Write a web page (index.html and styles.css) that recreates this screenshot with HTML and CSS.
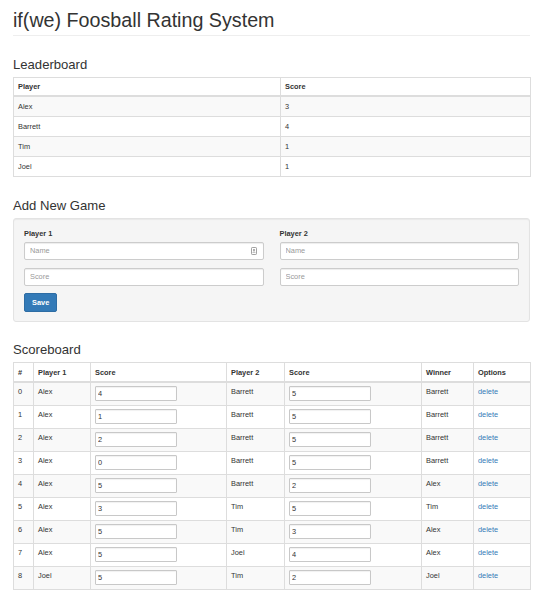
FILE: index.html
```html
<!DOCTYPE html>
<html lang="en">
<head>
<meta charset="utf-8">
<title>if(we) Foosball Rating System</title>
<link rel="stylesheet" href="styles.css">
</head>
<body>
<div class="page">
  <h1 class="title">if(we) Foosball Rating System</h1>

  <section class="section section-first">
    <h3 class="heading">Leaderboard</h3>
    <table class="tbl tbl-leader">
      <colgroup><col class="lw-player"><col class="lw-score"></colgroup>
      <thead><tr><th>Player</th><th>Score</th></tr></thead>
      <tbody>
        <tr><td>Alex</td><td>3</td></tr>
        <tr><td>Barrett</td><td>4</td></tr>
        <tr><td>Tim</td><td>1</td></tr>
        <tr><td>Joel</td><td>1</td></tr>
      </tbody>
    </table>
  </section>

  <section class="section">
    <h3 class="heading">Add New Game</h3>
    <form class="well">
      <div class="col">
        <label class="label">Player 1</label>
        <div class="field">
          <input class="form-control" type="text" placeholder="Name">
          <svg class="contact-icon" width="6" height="8" viewBox="0 0 6 8"><rect x="0.5" y="0.5" width="5" height="7" rx="0.8" fill="none" stroke="#8a8a8a" stroke-width="0.8"/><circle cx="3" cy="3" r="0.9" fill="#8a8a8a"/><path d="M1.6 5.6 Q3 4.2 4.4 5.6" fill="none" stroke="#8a8a8a" stroke-width="0.8"/></svg>
        </div>
        <div class="field">
          <input class="form-control" type="text" placeholder="Score">
        </div>
        <button class="btn" type="button">Save</button>
      </div>
      <div class="col">
        <label class="label">Player 2</label>
        <div class="field">
          <input class="form-control" type="text" placeholder="Name">
        </div>
        <div class="field">
          <input class="form-control" type="text" placeholder="Score">
        </div>
      </div>
    </form>
  </section>

  <section class="section">
    <h3 class="heading">Scoreboard</h3>
    <table class="tbl tbl-score">
      <colgroup>
        <col class="sw-num"><col class="sw-p1"><col class="sw-s1"><col class="sw-p2"><col class="sw-s2"><col class="sw-win"><col class="sw-opt">
      </colgroup>
      <thead><tr><th>#</th><th>Player 1</th><th>Score</th><th>Player 2</th><th>Score</th><th>Winner</th><th>Options</th></tr></thead>
      <tbody>
        <tr><td>0</td><td>Alex</td><td><input class="score-input" type="text" value="4"></td><td>Barrett</td><td><input class="score-input" type="text" value="5"></td><td>Barrett</td><td><a class="link" href="#">delete</a></td></tr>
        <tr><td>1</td><td>Alex</td><td><input class="score-input" type="text" value="1"></td><td>Barrett</td><td><input class="score-input" type="text" value="5"></td><td>Barrett</td><td><a class="link" href="#">delete</a></td></tr>
        <tr><td>2</td><td>Alex</td><td><input class="score-input" type="text" value="2"></td><td>Barrett</td><td><input class="score-input" type="text" value="5"></td><td>Barrett</td><td><a class="link" href="#">delete</a></td></tr>
        <tr><td>3</td><td>Alex</td><td><input class="score-input" type="text" value="0"></td><td>Barrett</td><td><input class="score-input" type="text" value="5"></td><td>Barrett</td><td><a class="link" href="#">delete</a></td></tr>
        <tr><td>4</td><td>Alex</td><td><input class="score-input" type="text" value="5"></td><td>Barrett</td><td><input class="score-input" type="text" value="2"></td><td>Alex</td><td><a class="link" href="#">delete</a></td></tr>
        <tr><td>5</td><td>Alex</td><td><input class="score-input" type="text" value="3"></td><td>Tim</td><td><input class="score-input" type="text" value="5"></td><td>Tim</td><td><a class="link" href="#">delete</a></td></tr>
        <tr><td>6</td><td>Alex</td><td><input class="score-input" type="text" value="5"></td><td>Tim</td><td><input class="score-input" type="text" value="3"></td><td>Alex</td><td><a class="link" href="#">delete</a></td></tr>
        <tr><td>7</td><td>Alex</td><td><input class="score-input" type="text" value="5"></td><td>Joel</td><td><input class="score-input" type="text" value="4"></td><td>Alex</td><td><a class="link" href="#">delete</a></td></tr>
        <tr><td>8</td><td>Joel</td><td><input class="score-input" type="text" value="5"></td><td>Tim</td><td><input class="score-input" type="text" value="2"></td><td>Joel</td><td><a class="link" href="#">delete</a></td></tr>
      </tbody>
    </table>
  </section>
</div>
</body>
</html>
```
FILE: styles.css
```css
* { box-sizing: border-box; }
html, body { margin: 0; padding: 0; background: #fff; }
body {
  font-family: "Liberation Sans", Arial, sans-serif;
  color: #333;
  font-size: 7.4px;
  line-height: 11px;
}
.page { padding: 9px 13px 0; width: 543px; }

.title {
  font-size: 19.7px;
  line-height: 22px;
  font-weight: 400;
  margin: 0;
  padding-bottom: 4px;
  border-bottom: 1px solid #eee;
}

.section { margin-top: 20.5px; }
.section-first { margin-top: 21px; }

.heading {
  font-size: 13.1px;
  line-height: 15px;
  font-weight: 400;
  margin: 0 0 5px;
}

/* tables */
.tbl {
  width: 517px;
  border-collapse: collapse;
  table-layout: fixed;
}
.tbl th, .tbl td {
  border: 1px solid #ddd;
  text-align: left;
  vertical-align: top;
  padding: 4px 4px;
  line-height: 11px;
}
.tbl th {
  font-weight: 700;
  padding: 3px 4px;
  border-bottom-width: 2px;
}
.tbl tbody tr:nth-child(odd) { background: #f9f9f9; }

.lw-player { width: 267px; }
.lw-score { width: 250px; }

.tbl-score th { padding: 4px 4px 3px; }
.tbl-score td { padding: 3px 4px 4px; }

.sw-num { width: 20px; }
.sw-p1 { width: 57px; }
.sw-s1 { width: 136px; }
.sw-p2 { width: 58px; }
.sw-s2 { width: 137px; }
.sw-win { width: 52px; }
.sw-opt { width: 57px; }

.score-input {
  display: block;
  width: 82px;
  height: 15px;
  margin: 0;
  padding: 0 2px;
  border: 1px solid #c8c8c8;
  border-radius: 1px;
  background: #fff;
  box-shadow: inset 0 1px 1px rgba(0,0,0,.06);
  font-family: "Liberation Sans", Arial, sans-serif;
  font-size: 7.4px;
  color: #333;
  outline: none;
}

.link { color: #337ab7; text-decoration: none; }

/* well / form */
.well {
  margin: 0;
  background: #f5f5f5;
  border: 1px solid #e3e3e3;
  border-radius: 3px;
  box-shadow: inset 0 1px 1px rgba(0,0,0,.05);
  padding: 9px 10px;
  display: grid;
  grid-template-columns: 1fr 1fr;
  column-gap: 16px;
  align-items: start;
}
.col { display: flex; flex-direction: column; align-items: flex-start; }
.label {
  display: block;
  font-weight: 700;
  line-height: 11px;
  margin-bottom: 3px;
}
.field { position: relative; width: 100%; margin-bottom: 8px; }
.field + .btn { margin-top: -1px; }
.form-control {
  display: block;
  width: 100%;
  height: 18px;
  margin: 0;
  padding: 0 5px;
  border: 1px solid #ccc;
  border-radius: 2px;
  background: #fff;
  box-shadow: inset 0 1px 1px rgba(0,0,0,.075);
  font-family: "Liberation Sans", Arial, sans-serif;
  font-size: 7.4px;
  color: #555;
  outline: none;
}
.form-control::placeholder { color: #999; }
.contact-icon {
  position: absolute;
  right: 7px;
  top: 5px;
}
.btn {
  height: 19px;
  margin: 0;
  padding: 0 7px;
  background: #337ab7;
  border: 1px solid #2e6da4;
  border-radius: 2px;
  color: #fff;
  font-family: "Liberation Sans", Arial, sans-serif;
  font-size: 7.4px;
  font-weight: 700;
  line-height: 17px;
  cursor: pointer;
}
```
